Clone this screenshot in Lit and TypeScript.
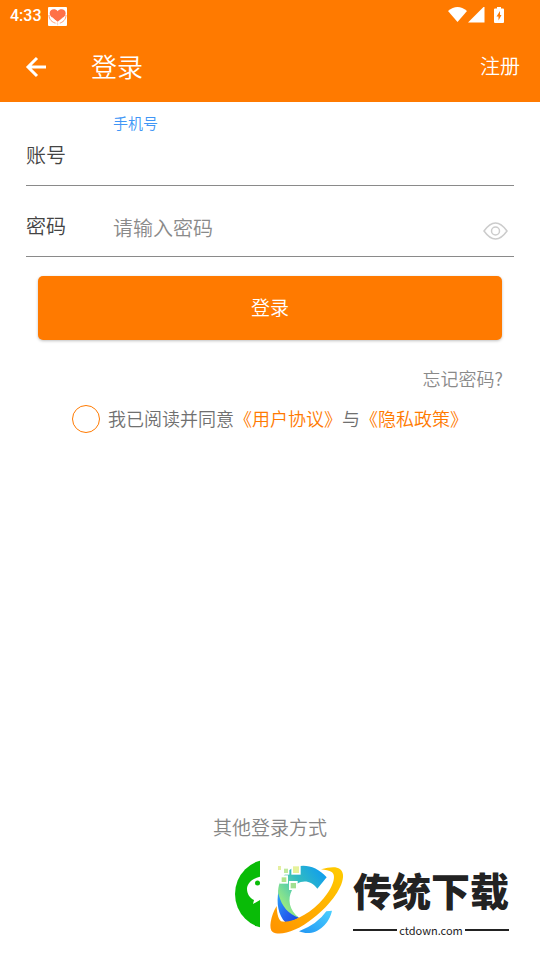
import { LitElement, html, css } from "lit";
import { customElement } from "lit/decorators.js";

const baseStyles = css`
  * { box-sizing: border-box; }
  button {
    margin: 0;
    padding: 0;
    border: 0;
    background: none;
    font: inherit;
    color: inherit;
    cursor: pointer;
  }
  svg { display: block; }
`;

@customElement("status-bar")
class StatusBar extends LitElement {
  static styles = [baseStyles, css`
    :host {
      display: flex;
      align-items: center;
      justify-content: space-between;
      height: 32px;
      padding: 0 36px 2px 10px;
      color: #fff;
      font: 500 16px/20px Roboto, sans-serif;
    }
    .left { display: flex; align-items: center; gap: 6px; padding-top: 2px; }
    .right { display: flex; align-items: center; }
    .battery { margin-left: 9px; }
  `];

  render() {
    return html`
      <div class="left">
        <span>4:33</span>
        <svg width="19" height="19" viewBox="0 0 57 57" aria-hidden="true">
          <rect width="57" height="57" rx="3" fill="#fff" />
          <path d="M29 44C16 35 5 28 5 19C5 6 22 3 29 13C36 3 53 6 53 19C53 28 42 35 29 44Z" fill="#ff7048" />
          <path d="M3 24C3 38 12 46 25 49M54 24C54 38 45 46 33 49" fill="none" stroke="#ff9a70" stroke-width="3" />
          <path d="M12 31L24 44V52M46 31L34 44V52" fill="none" stroke="#fff" stroke-width="3" />
          <path d="M29 46v9" stroke="#ffd2b6" stroke-width="3" />
        </svg>
      </div>
      <div class="right">
        <svg width="20" height="17" viewBox="0 0 20 17" fill="#fff" aria-hidden="true">
          <path d="M0 4Q9.500-4 19 4L9.500 15Z" />
        </svg>
        <svg width="17" height="17" viewBox="0 0 17 17" fill="#fff" aria-hidden="true">
          <path d="M0 15.500H16.500V-1Z" />
        </svg>
        <svg class="battery" width="10" height="17" viewBox="0 0 10 17" aria-hidden="true">
          <path d="M3 0h4v1.500h2q1 0 1 1v12.500q0 1-1 1H1q-1 0-1-1V2.500q0-1 1-1h2z" fill="#fff" />
          <path d="M6 4L2.500 9.500h2v4L7.500 8H6z" fill="#ff7a00" />
        </svg>
      </div>
    `;
  }
}

@customElement("brand-mark")
class BrandMark extends LitElement {
  static styles = [baseStyles, css`
    :host {
      display: flex;
      align-items: center;
      background: #fff;
      color: #222;
    }
    .text { width: 160px; }
    .name {
      margin-top: 8px;
      font: 900 39px/48px "Noto Sans CJK SC", sans-serif;
      white-space: nowrap;
    }
    .domain {
      display: flex;
      align-items: center;
      gap: 2px;
      width: 156px;
      margin-top: 8px;
      font: 400 11px/18px "Noto Sans CJK SC", sans-serif;
    }
    .domain::before, .domain::after {
      content: "";
      flex: 1;
      height: 2px;
      background: #222;
    }
  `];

  render() {
    return html`
      <svg width="93" height="95" viewBox="105 0 279 285" aria-hidden="true">
        <defs>
          <linearGradient id="ring" x1="0" y1="1" x2="1" y2="0">
            <stop offset="0" stop-color="#ff9200" /><stop offset="1" stop-color="#ffcc00" />
          </linearGradient>
          <linearGradient id="arc" x1="0.100" y1="0.800" x2="1" y2="0.100">
            <stop offset="0" stop-color="#9cec80" /><stop offset="0.500" stop-color="#32bcc0" /><stop offset="1" stop-color="#0c9af4" />
          </linearGradient>
          <linearGradient id="deep" x1="0" y1="0" x2="1" y2="1">
            <stop offset="0" stop-color="#2ca8fa" /><stop offset="0.600" stop-color="#2460ee" /><stop offset="1" stop-color="#1747e0" />
          </linearGradient>
          <linearGradient id="base" x1="0" y1="1" x2="1" y2="0">
            <stop offset="0" stop-color="#2196f3" /><stop offset="1" stop-color="#4bd0ff" />
          </linearGradient>
        </defs>
        <path d="M161 120C153 160 160 195 181 217Q201 216 222 203C190 188 175 158 161 120Z" fill="url(#deep)" />
        <path d="M305 82C263 34 202 38 174 80C158 103 158 126 161 134C171 170 190 192 222 203C192 181 187 147 201 120C213 92 253 82 277 116Z" fill="url(#arc)" />
        <path d="M222 244Q278 222 304 184L321 182C311 228 267 263 222 244Z" fill="url(#base)" />
        <path d="M288 58C328 47 350 50 354 74C357 108 318 163 265 204C217 244 165 259 143 246C130 237 137 198 155 168C156 186 158 205 168 214C199 222 258 191 296 145C323 113 336 76 320 66C313 61 301 61 288 58Z" fill="url(#ring)" />
        <g fill="#fff">
          <rect x="154" y="42" width="19" height="22" /><rect x="171" y="49" width="22" height="25" />
          <rect x="199" y="43" width="28" height="31" /><rect x="164" y="76" width="25" height="25" />
          <rect x="192" y="93" width="26" height="27" />
        </g>
        <rect x="159" y="48" width="9" height="12" fill="#e5efa0" />
        <rect x="177" y="56" width="12" height="13" fill="#bfea9c" />
        <rect x="204" y="49" width="18" height="20" fill="#e6f29a" />
        <rect x="170" y="82" width="14" height="14" fill="#afe58b" />
        <rect x="197" y="99" width="16" height="16" fill="#a2df91" />
      </svg>
      <div class="text">
        <div class="name">传统下载</div>
        <div class="domain">ctdown.com</div>
      </div>
    `;
  }
}

@customElement("app-root")
class AppRoot extends LitElement {
  static styles = [baseStyles, css`
    :host {
      display: flex;
      flex-direction: column;
      min-height: 100vh;
      background: #fff;
      color: #444;
      font: 350 20px/30px "Noto Sans CJK SC", sans-serif;
    }
    a { color: inherit; text-decoration: none; }
    header { background: #ff7a00; color: #fff; }
    .bar {
      display: flex;
      align-items: center;
      height: 70px;
      padding: 0 20px 2px 24px;
    }
    .back { padding-top: 2px; }
    h1 { flex: 1; margin: 0 0 0 43px; font: inherit; font-size: 26px; line-height: 38px; }
    .row {
      display: grid;
      grid-template-columns: 87px 1fr auto;
      align-items: center;
      margin: 0 26px;
      border-bottom: 1px solid #8a8a8a;
    }
    .account { padding: 10px 0 14px; }
    .hint { grid-column: 2; font-size: 15px; line-height: 22px; color: #4096f6; }
    .account .caption { grid-column: 1; grid-row: 2; }
    .account input { grid-column: 2 / 4; }
    .account .caption, .account input { height: 37px; }
    .account .caption { line-height: 42px; }
    .password { height: 71px; padding-top: 12px; }
    .password .caption { padding-bottom: 2px; }
    input[type="text"], input[type="password"] {
      min-width: 0;
      width: 100%;
      height: 36px;
      padding: 0;
      border: 0;
      outline: 0;
      background: none;
      color: #444;
      font: inherit;
    }
    input::placeholder { color: #8a8a8a; opacity: 1; }
    .eye { margin: 8px 6px 0 0; }
    .submit {
      height: 64px;
      margin: 19px 38px 0;
      padding-bottom: 2px;
      border-radius: 5px;
      background: #ff7a00;
      box-shadow: 0 1px 3px rgba(0, 0, 0, 0.25);
      color: #fff;
      font-size: 19px;
    }
    .forgot {
      align-self: flex-end;
      margin: 23px 37px 0 0;
      font-size: 18px;
      color: #8a8a8a;
    }
    .agree {
      display: flex;
      align-items: center;
      justify-content: center;
      gap: 8px;
      margin-top: 10px;
      font-size: 18px;
      color: #707070;
    }
    .agree div { padding-bottom: 2px; }
    .agree input {
      appearance: none;
      width: 28px;
      height: 28px;
      margin: 0;
      border: 1px solid #ff7a00;
      border-radius: 50%;
    }
    .agree input:checked { background: #ff7a00; box-shadow: inset 0 0 0 5px #fff; }
    .agree a { color: #ff7a00; }
    footer {
      position: relative;
      display: flex;
      flex-direction: column;
      align-items: center;
      gap: 17px;
      margin-top: auto;
      padding: 24px 0 31px;
      font-size: 19px;
      color: #858585;
    }
    brand-mark { position: absolute; left: calc(50% - 10px); bottom: 15px; }
  `];

  render() {
    return html`
      <header>
        <status-bar></status-bar>
        <div class="bar">
          <button class="back" aria-label="返回">
            <svg width="24" height="24" viewBox="0 0 24 24" fill="none" stroke="#fff" stroke-width="3">
              <path d="M22 12H4M13 3L4 12L13 21" />
            </svg>
          </button>
          <h1>登录</h1>
          <a href="#register">注册</a>
        </div>
      </header>

      <div class="row account">
        <label class="hint" for="phone">手机号</label>
        <label class="caption" for="phone">账号</label>
        <input id="phone" type="text" inputmode="tel" />
      </div>
      <div class="row password">
        <label class="caption" for="password">密码</label>
        <input id="password" type="password" placeholder="请输入密码" />
        <button class="eye" aria-label="显示密码">
          <svg width="25" height="18" viewBox="0 0 25 18" fill="none" stroke="#ccc" stroke-width="1.500">
            <path d="M1 9Q12.500-7 24 9Q12.500 25 1 9Z" />
            <circle cx="12.500" cy="9" r="4" />
          </svg>
        </button>
      </div>

      <button class="submit">登录</button>
      <a class="forgot" href="#forgot">忘记密码?</a>
      <div class="agree">
        <input id="agree" type="checkbox" />
        <div>
          <label for="agree">我已阅读并同意</label><a href="#terms">《用户协议》</a>与<a href="#privacy">《隐私政策》</a>
        </div>
      </div>

      <footer>
        <div>其他登录方式</div>
        <button aria-label="微信登录">
          <svg width="70" height="70" viewBox="0 0 70 70">
            <circle cx="35" cy="35" r="35" fill="#09bb07" />
            <path d="M32 17C20 17 12 23 12 30C12 35 15 39 19 41L18 45L25 41Q44 44 51 32C51 22 43 17 32 17Z" fill="#fff" />
            <circle cx="22.500" cy="24" r="2.500" fill="#09bb07" />
            <circle cx="38" cy="24" r="2.500" fill="#09bb07" />
            <path d="M43 31C34 31 27 36 27 43C27 51 38 55 47 52L54 55L52 50C65 40 55 31 43 31Z" fill="#fff" stroke="#09bb07" />
          </svg>
        </button>
        <brand-mark></brand-mark>
      </footer>
    `;
  }
}
